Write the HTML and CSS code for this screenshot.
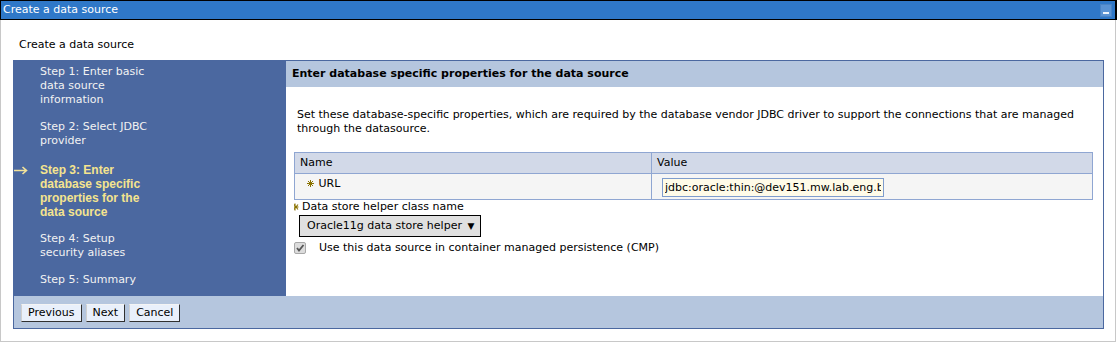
FILE: index.html
```html
<!DOCTYPE html>
<html lang="en">
<head>
    <meta charset="UTF-8">
    <title>Create a data source</title>
    <link rel="stylesheet" href="styles.css">
</head>
<body>
    <div class="titlebar">
        <span class="titlebar-text">Create a data source</span>
        <span class="min-btn"></span>
    </div>
    <div class="page">
        <div class="page-title">Create a data source</div>
        <div class="wizard">
            <div class="wizard-main">
                <ul class="steps">
                    <li>Step 1: Enter basic<br>data source<br>information</li>
                    <li>Step 2: Select JDBC<br>provider</li>
                    <li class="current">
                        <svg class="arrow" width="14" height="9" viewBox="0 0 14 9">
                            <path d="M0 4.5 H12.5 M8.5 1 L12.5 4.5 L8.5 8" fill="none" stroke="#f3e39a" stroke-width="1.6"/>
                        </svg>
                        Step 3: Enter<br>database specific<br>properties for the<br>data source
                    </li>
                    <li>Step 4: Setup<br>security aliases</li>
                    <li>Step 5: Summary</li>
                </ul>
                <div class="panel">
                    <div class="panel-head">Enter database specific properties for the data source</div>
                    <div class="panel-body">
                        <p class="desc">Set these database-specific properties, which are required by the database vendor JDBC driver to support the connections that are managed through the datasource.</p>
                        <table class="props">
                            <tr>
                                <th class="col-name">Name</th>
                                <th>Value</th>
                            </tr>
                            <tr>
                                <td class="name-cell">
                                    <svg class="req" width="7" height="7" viewBox="0 0 7 7">
                                        <path d="M3.5 0 V7 M0 3.5 H7 M1 1 L6 6 M6 1 L1 6" stroke="#8a7200" stroke-width="1"/>
                                    </svg>
                                    URL
                                </td>
                                <td class="value-cell">
                                    <input class="text-input" type="text" value="jdbc:oracle:thin:@dev151.mw.lab.eng.bos.redhat.com:1521:qaora">
                                </td>
                            </tr>
                        </table>
                        <div class="field-label">
                            <svg class="req-small" width="5" height="8" viewBox="0 0 5 8">
                                <path d="M1 0.5 V7.5 M0 4 H4.5 M0 1.5 L4 6.5 M4 1.5 L0 6.5" stroke="#8a7200" stroke-width="1.1"/>
                            </svg>
                            Data store helper class name
                        </div>
                        <div class="select">Oracle11g data store helper <span class="caret">&#9660;</span></div>
                        <div class="check-row">
                            <span class="checkbox">
                                <svg width="10" height="10" viewBox="0 0 10 10">
                                    <path d="M2 5 L4 7.5 L8.5 2" fill="none" stroke="#555" stroke-width="1.8"/>
                                </svg>
                            </span>
                            <span>Use this data source in container managed persistence (CMP)</span>
                        </div>
                    </div>
                </div>
            </div>
            <div class="buttons">
                <button type="button">Previous</button>
                <button type="button">Next</button>
                <button type="button">Cancel</button>
            </div>
        </div>
    </div>
</body>
</html>
```
FILE: styles.css
```css
body {
    margin: 0;
    font-family: "DejaVu Sans", Verdana, sans-serif;
    font-size: 11px;
    line-height: 14px;
    color: #000;
    background-color: #fff;
}

.titlebar {
    height: 18px;
    background-color: #2f78c8;
    border: 1px solid #000;
    border-right-width: 2px;
    display: flex;
    align-items: center;
    justify-content: space-between;
    color: #fff;
}

.titlebar-text {
    padding-left: 2px;
}

.min-btn {
    position: relative;
    width: 10px;
    height: 11px;
    margin-right: 3px;
    background-color: #5a93d4;
    border: 1px solid #4a84c6;
}

.min-btn::after {
    content: "";
    position: absolute;
    left: 2px;
    right: 2px;
    bottom: 2px;
    height: 2px;
    background-color: #eef4fb;
}

.page {
    border: 1px solid #c8c8c8;
    border-top: none;
    margin-right: 1px;
    padding: 18px 11px 12px 12px;
}

.page-title {
    padding-left: 6px;
    margin-bottom: 8px;
}

.wizard-main {
    display: flex;
    height: 236px;
}

.steps {
    list-style: none;
    margin: 0;
    padding: 5px 0 0 27px;
    width: 246px;
    background-color: #4b68a0;
    color: #f2f2f2;
}

.steps li {
    position: relative;
    margin-bottom: 13px;
}

.steps li.current {
    margin-top: 15px;
    font-family: "Liberation Sans", Arial, sans-serif;
    font-size: 12px;
    font-weight: bold;
    color: #f5e48e;
}

.arrow {
    position: absolute;
    left: -26px;
    top: 3px;
}

.panel {
    flex: 1;
    border-top: 1px solid #4b68a0;
    border-right: 1px solid #4b68a0;
}

.panel-head {
    height: 26px;
    line-height: 25px;
    padding-left: 6px;
    background-color: #b5c6de;
    font-weight: bold;
}

.panel-body {
    padding: 21px 10px 0 8px;
}

.desc {
    margin: 0 0 16px 0;
    padding-left: 3px;
}

.props {
    width: 100%;
    border-collapse: collapse;
    border: 1px solid #8fa6d2;
}

.props th {
    text-align: left;
    font-weight: normal;
    height: 20px;
    padding: 0 5px;
    background-color: #d2d9e8;
    border: 1px solid #8fa6d2;
}

.props th.col-name {
    width: 346px;
}

.props td {
    height: 21px;
    background-color: #f5f5f5;
    border: 1px solid #8fa6d2;
    vertical-align: top;
}

.name-cell {
    padding: 3px 0 1px 12px;
}

.req {
    margin-right: 1px;
    vertical-align: 0;
}

.value-cell {
    padding: 4px 0 0 10px;
}

.text-input {
    width: 216px;
    height: 15px;
    padding: 1px 2px;
    border: 1px solid #7e9ccd;
    background-color: #fffbe8;
    font-family: "DejaVu Sans", Verdana, sans-serif;
    font-size: 11px;
    color: #000;
}

.field-label {
    display: flex;
    align-items: center;
    gap: 3px;
}

.select {
    display: inline-block;
    margin: 1px 0 0 5px;
    height: 20px;
    line-height: 20px;
    padding: 0 6px 0 7px;
    border: 1px solid #000;
    background-color: #e0e0e0;
}

.caret {
    font-size: 9px;
    margin-left: 2px;
}

.check-row {
    display: flex;
    align-items: center;
    gap: 13px;
    margin-top: 4px;
}

.checkbox {
    display: flex;
    align-items: center;
    justify-content: center;
    width: 10px;
    height: 10px;
    border: 1px solid #a8a8a8;
    border-radius: 2px;
    background-color: #dcdcdc;
}

.buttons {
    display: flex;
    gap: 4px;
    height: 33px;
    padding: 8px 0 0 7px;
    box-sizing: border-box;
    background-color: #b5c6de;
    border: 1px solid #4b68a0;
    border-top: none;
}

.buttons button {
    height: 18px;
    padding: 0 6px;
    font-family: "DejaVu Sans", Verdana, sans-serif;
    font-size: 11px;
    line-height: 14px;
    color: #000;
    background-color: #e9f0fb;
    border: 1px solid;
    border-color: #f4f4f4 #303030 #303030 #d0d0d0;
}
```
